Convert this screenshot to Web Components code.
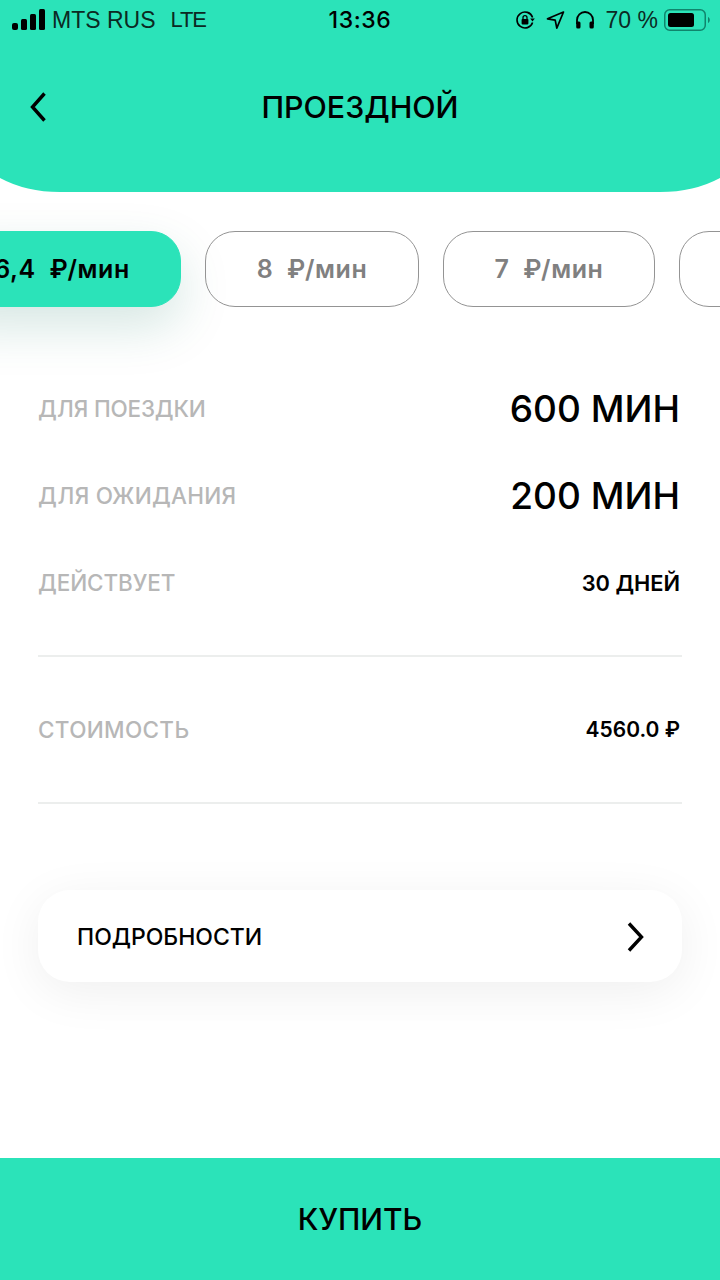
<!DOCTYPE html>
<html lang="ru"><head><meta charset="utf-8"><title>Проездной</title>
<style>
html,body{margin:0;padding:0;background:#fff}
body{width:720px;height:1280px;overflow:hidden;font-family:Inter,"Noto Sans",sans-serif;color:#000}
</style></head><body>
<app-screen>
  <status-bar slot="top"></status-bar>
  <app-header slot="top">ПРОЕЗДНОЙ</app-header>
  <tariff-strip>
    <tariff-pill active width="238">6,4  ₽/мин</tariff-pill>
    <tariff-pill width="214">8  ₽/мин</tariff-pill>
    <tariff-pill width="212">7  ₽/мин</tariff-pill>
    <tariff-pill width="212"></tariff-pill>
  </tariff-strip>
  <info-list>
    <info-row size="l"><span slot="label" style="letter-spacing:-.2px">ДЛЯ ПОЕЗДКИ</span>600 МИН</info-row>
    <info-row size="l"><span slot="label" style="letter-spacing:.25px">ДЛЯ ОЖИДАНИЯ</span>200 МИН</info-row>
    <info-row size="s"><span slot="label" style="letter-spacing:-.1px">ДЕЙСТВУЕТ</span>30 ДНЕЙ</info-row>
    <info-rule style="margin-top:29px"></info-rule>
    <info-row size="s" spaced><span slot="label" style="letter-spacing:.33px">СТОИМОСТЬ</span>4560.0 ₽</info-row>
    <info-rule></info-rule>
  </info-list>
  <details-card>ПОДРОБНОСТИ</details-card>
  <buy-bar slot="bottom">КУПИТЬ</buy-bar>
</app-screen>
<script>
function def(name,html){customElements.define(name,class extends HTMLElement{
  constructor(){super();const r=this.attachShadow({mode:'open'});r.innerHTML=html;}
  connectedCallback(){const w=this.getAttribute('width');if(w)this.style.width=w+'px';}
});}
const TEAL='#2be3b9';
def('app-screen',`<style>:host{display:flex;flex-direction:column;width:720px;height:1280px}
main{flex:1;display:flex;flex-direction:column;min-height:0}</style>
<slot name="top"></slot><main><slot></slot></main><slot name="bottom"></slot>`);
def('status-bar',`<style>:host{display:grid;grid-template-columns:1fr auto 1fr;align-items:center;height:40px;box-sizing:border-box;background:${TEAL};font:400 23px "Liberation Sans",sans-serif;color:#0b2a23}
.l,.r{display:flex;align-items:center}
.l{padding-left:12px}
.l span{margin-left:7px;white-space:pre}
.l span.lte{margin-left:15px;font-size:22px;letter-spacing:-1.2px}
.t{font:500 23px Inter,sans-serif;color:#000;letter-spacing:.6px}
.r{justify-content:flex-end;padding-right:10px}
svg{display:block}
</style>
<div class="l"><svg width="33" height="22" viewBox="0 0 33 22"><rect x="0" y="14" width="6" height="7" rx="2"/><rect x="9" y="10" width="6" height="11" rx="1.5"/><rect x="18" y="5" width="6" height="16" rx="1.500"/><rect x="27" y="0" width="6" height="21" rx="1.5"/></svg><span>MTS RUS</span><span class="lte">LTE</span></div>
<div class="t">13:36</div>
<div class="r">
<svg width="20" height="20" viewBox="0 0 20 20" fill="none" stroke="#000" stroke-width="1.6"><path d="M17.600 7.500A8 8 0 1 0 17.600 12.500"/><path d="M15.200 8.400h4.600l-2.300 3z" fill="#000" stroke="none"/><rect x="6.600" y="9" width="6.800" height="5.400" rx=".8" fill="#000" stroke="none"/><path d="M8 9.500V7.600a2 2 0 0 1 4 0v1.900" stroke-width="1.3"/></svg>
<svg style="margin-left:11px" width="19" height="20" viewBox="0 0 19 20" fill="none" stroke="#000" stroke-width="1.7" stroke-linejoin="round"><path d="M17.500 2 1.500 8.800l7.700 1.300 1.600 8z"/></svg>
<svg style="margin-left:10px" width="20" height="20" viewBox="0 0 20 20" fill="none" stroke="#000" stroke-width="1.8"><path d="M2 14V10a8 8 0 0 1 16 0v4"/><rect x="1.200" y="11.500" width="4.300" height="7" rx="1.500" fill="#000" stroke="none"/><rect x="14.500" y="11.500" width="4.300" height="7" rx="1.500" fill="#000" stroke="none"/></svg>
<span style="margin-left:11px;white-space:pre;font-size:23px">70 %</span>
<svg style="margin-left:6px" width="46" height="22" viewBox="0 0 46 22"><rect x=".75" y=".75" width="40.500" height="20.500" rx="5" fill="none" stroke="#10856c" stroke-width="1.500"/><rect x="4" y="4" width="26" height="14" rx="2.500" fill="#000"/><path d="M44 8v6c1.200-.6 1.800-1.600 1.800-3s-.6-2.400-1.800-3z" fill="#10856c"/></svg>
</div>`);
def('app-header',`<style>:host{display:block;height:152px;box-sizing:border-box;padding-top:49px;background:${TEAL};clip-path:path("M0 0H720V138Q694 152 660 152H60Q26 152 0 138Z");font:500 30.400px Inter,sans-serif}
.bar{display:grid;grid-template-columns:1fr auto 1fr;width:100%;align-items:center}
svg{display:block;margin-left:30px}</style>
<div class="bar"><svg width="16" height="30" viewBox="0 0 16 30" fill="none" stroke="#000" stroke-width="3.4"><path d="M14.500 1.500 2.500 15l12 13.500"/></svg><div><slot></slot></div><div></div></div>`);
def('tariff-strip',`<style>:host{display:block;height:115px;box-sizing:border-box;padding-top:39px;flex:none;overflow-x:clip;overflow-y:visible}
.row{display:flex;gap:24px;margin-left:-57px}</style><div class="row"><slot></slot></div>`);
def('tariff-pill',`<style>:host{display:flex;align-items:center;justify-content:center;flex:none;height:76px;box-sizing:border-box;border:1.5px solid #949494;border-radius:30px;color:#808080;font:600 25px Inter,"Noto Sans",sans-serif;letter-spacing:.6px;white-space:pre;}
:host([active]){background:${TEAL};border-color:${TEAL};color:#000;box-shadow:0 20px 50px rgba(12,110,90,.17)}</style><slot></slot>`);
def('info-list',`<style>:host{display:block;margin:0 38px;flex:none;padding-top:58px}</style><slot></slot>`);
def('info-row',`<style>:host{display:flex;align-items:center;justify-content:space-between;height:87px;white-space:nowrap;color:#000;font:500 37px Inter,sans-serif;padding-right:2px}
:host([size=s]){font-size:21.800px;font-weight:600}
:host([spaced]){height:145px;font-size:21px}
.lab{font:500 22.500px Inter,sans-serif;color:#b7b7b7}</style><span class="lab"><slot name="label"></slot></span><span><slot></slot></span>`);
def('info-rule',`<style>:host{display:block;height:2px;background:#eceeed}</style>`);
def('details-card',`<style>:host{display:flex;align-items:center;justify-content:space-between;flex:none;height:92px;box-sizing:border-box;margin:86px 38px 0;padding:2px 38px 0 39px;border-radius:32px;background:#fff;box-shadow:0 10px 50px rgba(0,0,0,.065);font:500 23px Inter,sans-serif}
svg{display:block}</style><span><slot></slot></span><svg width="17" height="30" viewBox="0 0 17 30" fill="none" stroke="#000" stroke-width="3.4"><path d="M2 1.500 14.500 15 2 28.500"/></svg>`);
def('buy-bar',`<style>:host{display:flex;align-items:center;justify-content:center;height:122px;background:${TEAL};font:500 30px Inter,sans-serif}</style><slot></slot>`);
</script>
</body></html>
